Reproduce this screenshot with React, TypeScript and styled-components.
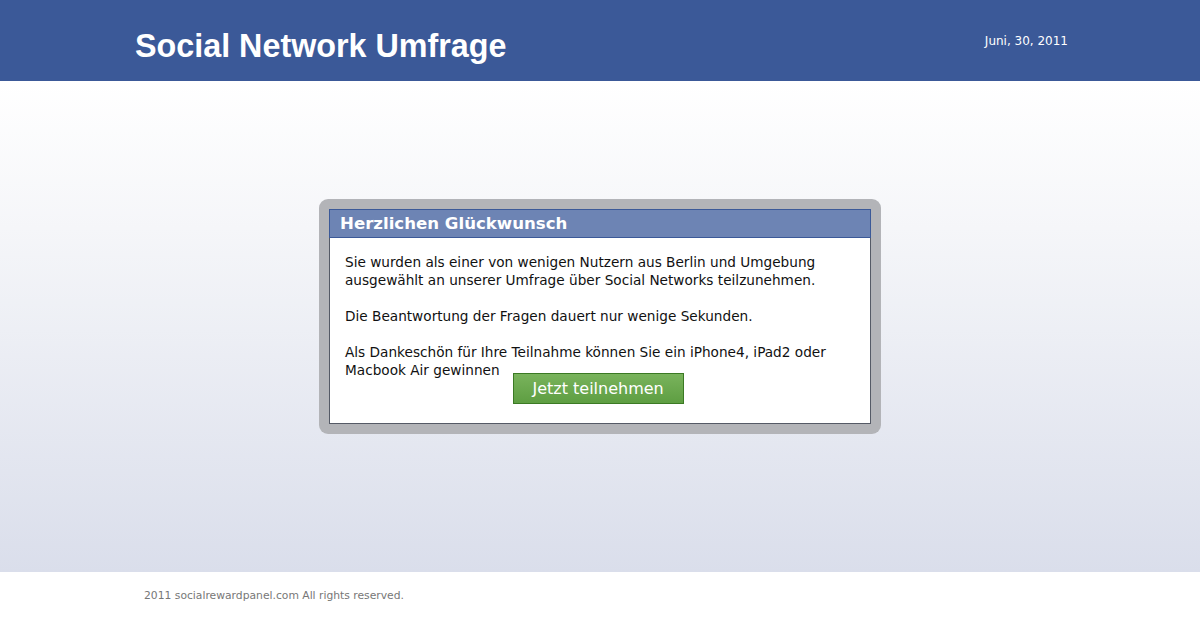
import React from "react";
import styled, { createGlobalStyle } from "styled-components";

const Global = createGlobalStyle`
  html, body { margin: 0; padding: 0; }
  body { font-family: "DejaVu Sans", Verdana, sans-serif; background: #fff; }
`;

const Page = styled.div`
  width: 1200px;
  height: 620px;
  display: flex;
  flex-direction: column;
  overflow: hidden;
`;

const Header = styled.header`
  height: 81px;
  background: #3b5998;
  display: flex;
  justify-content: space-between;
  padding: 0 132px 0 135px;
  box-sizing: border-box;
`;

const Title = styled.h1`
  margin: 28px 0 0;
  font-family: "Liberation Sans", Arial, sans-serif;
  font-weight: bold;
  font-size: 32.3px;
  line-height: 36px;
  color: #fff;
  height: 36px;
`;

const DateText = styled.div`
  margin-top: 34px;
  font-size: 12px;
  line-height: 15px;
  color: #fff;
`;

const Main = styled.main`
  flex: 1;
  background: linear-gradient(to bottom, #ffffff 0%, #f5f6f9 30%, #dadeeb 100%);
  display: flex;
  justify-content: center;
  padding-top: 118px;
  box-sizing: border-box;
`;

const Frame = styled.div`
  width: 562px;
  height: 235px;
  box-sizing: border-box;
  background: #b3b4b8;
  border-radius: 9px;
  padding: 10px;
`;

const Dialog = styled.div`
  height: 100%;
  box-sizing: border-box;
  background: #fff;
  border: 1px solid #555a66;
  display: flex;
  flex-direction: column;
`;

const DialogHead = styled.div`
  height: 29px;
  box-sizing: border-box;
  background: #6d84b4;
  border: 1px solid #3b5998;
  margin: -1px -1px 0;
  padding: 3px 0 0 10px;
  font-weight: bold;
  font-size: 16.6px;
  line-height: 21px;
  color: #fff;
`;

const Body = styled.div`
  padding: 15px 15px 0 15px;
  font-size: 13.65px;
  line-height: 18px;
  color: #111;
`;

const Para = styled.p`
  margin: 0 0 18px;
  &:last-child { margin-bottom: 0; }
`;

const Button = styled.button`
  display: inline-block;
  vertical-align: top;
  margin: 12px 0 0 13px;
  width: 171px;
  height: 31px;
  box-sizing: border-box;
  border: 1px solid #3b7a24;
  background: linear-gradient(to bottom, #79b35c, #5e9e42);
  color: #fff;
  font-family: "DejaVu Sans", Verdana, sans-serif;
  font-size: 16px;
  line-height: 20px;
  padding: 0;
  cursor: pointer;
`;

const Footer = styled.footer`
  height: 48px;
  background: #fff;
  padding: 17px 0 0 144px;
  box-sizing: border-box;
  font-size: 10.75px;
  line-height: 14px;
  color: #777;
`;

export default function App() {
  return (
    <Page>
      <Global />
      <Header>
        <Title>Social Network Umfrage</Title>
        <DateText>Juni, 30, 2011</DateText>
      </Header>
      <Main>
        <Frame>
          <Dialog>
            <DialogHead>Herzlichen Glückwunsch</DialogHead>
            <Body>
              <Para>
                Sie wurden als einer von wenigen Nutzern aus Berlin und Umgebung
                ausgewählt an unserer Umfrage über Social Networks teilzunehmen.
              </Para>
              <Para>Die Beantwortung der Fragen dauert nur wenige Sekunden.</Para>
              <Para>
                Als Dankeschön für Ihre Teilnahme können Sie ein iPhone4, iPad2 oder
                Macbook Air gewinnen
                <Button>Jetzt teilnehmen</Button>
              </Para>
            </Body>
          </Dialog>
        </Frame>
      </Main>
      <Footer>2011 socialrewardpanel.com All rights reserved.</Footer>
    </Page>
  );
}
